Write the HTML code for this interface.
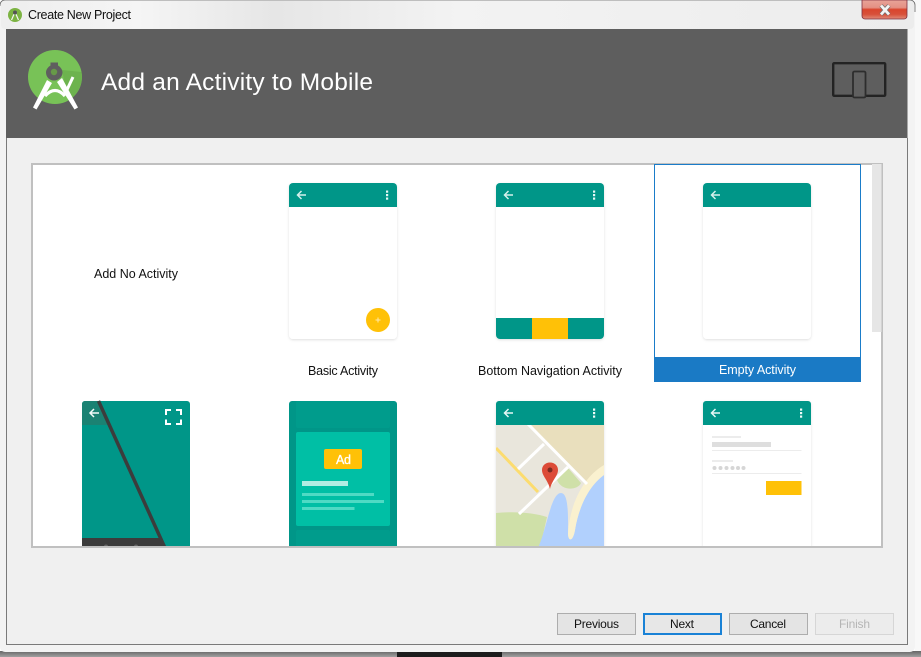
<!DOCTYPE html>
<html>
<head>
<meta charset="utf-8">
<title>Create New Project</title>
<style>
html,body{margin:0;padding:0;width:921px;height:657px;overflow:hidden;background:#fff}
svg{display:block}
text{font-family:"Liberation Sans",sans-serif;font-size:12.500px;fill:#111}
</style>
</head>
<body>
<svg width="921" height="657" viewBox="0 0 921 657" xmlns="http://www.w3.org/2000/svg">
<defs>
<linearGradient id="bar" x1="0" y1="0" x2="1" y2="0">
<stop offset="0" stop-color="#eeeeee"/><stop offset=".15" stop-color="#f5f5f5"/><stop offset=".3" stop-color="#e6e6e6"/><stop offset=".5" stop-color="#f3f3f3"/><stop offset="1" stop-color="#ececec"/>
</linearGradient>
<linearGradient id="close" x1="0" y1="0" x2="0" y2="1">
<stop offset="0" stop-color="#e8a398"/><stop offset=".4" stop-color="#e49084"/><stop offset=".5" stop-color="#d9452e"/><stop offset=".75" stop-color="#d8503a"/><stop offset="1" stop-color="#e08a78"/>
</linearGradient>
<linearGradient id="shade" x1="0" y1="0" x2="0" y2="1">
<stop offset="0" stop-color="#666"/><stop offset="1" stop-color="#a0a0a0"/>
</linearGradient>
<filter id="sh" x="-10%" y="-10%" width="120%" height="120%">
<feDropShadow dx="0" dy="1" stdDeviation="1.200" flood-color="#000" flood-opacity=".13"/>
</filter>
<clipPath id="listclip"><rect x="33" y="164" width="848" height="382"/></clipPath>
<clipPath id="mapclip"><path d="M496 425H604V548H496Z"/></clipPath>
</defs>

<!-- desktop behind -->
<rect x="0" y="651" width="921" height="6" fill="url(#shade)"/>
<rect x="397" y="652" width="105" height="5" fill="#1c1c1c"/>
<rect x="915" y="0" width="6" height="651" fill="#f8f8f8"/>

<!-- window frame -->
<rect x="0" y="0" width="915" height="652" rx="5" fill="#f3f3f3"/>
<path d="M0 6V5a5 5 0 0 1 5-5H910a5 5 0 0 1 5 5V12" fill="none" stroke="#666" stroke-width=".8"/>
<rect x="1" y="1" width="913" height="28" rx="4" fill="url(#bar)"/>
<rect x="6.500" y="29" width="901" height="615.500" fill="#f0f0f0"/>
<path d="M6.500 138V644.500H907.500V138" fill="none" stroke="#7a7a7a" stroke-width="1"/>

<!-- title bar -->
<circle cx="15" cy="15" r="7" fill="#7cb342"/>
<path d="M15 12L11.500 20M15 12L18.500 20" stroke="#f4f4f4" stroke-width="1.200" fill="none"/>
<circle cx="15" cy="12.500" r="2" fill="#555"/>
<text x="28" y="19" textLength="103" lengthAdjust="spacing">Create New Project</text>

<!-- close -->
<path d="M862 0H907V16a3 3 0 0 1-3 3H865a3 3 0 0 1-3-3Z" fill="url(#close)" stroke="#7d3040" stroke-width=".8"/>
<path d="M881 5.500L889 14.500M889 5.500L881 14.500" stroke="#6f6f6f" stroke-width="4.200"/>
<path d="M881 5.500L889 14.500M889 5.500L881 14.500" stroke="#f4f4f4" stroke-width="2.800"/>

<!-- header -->
<rect x="6" y="29" width="901.500" height="109" fill="#5e5e5e"/>
<circle cx="55" cy="77" r="27" fill="#78c257"/>
<path d="M62 70L81.500 72A27 27 0 0 1 68 100.500Z" fill="#6aae4b" opacity=".75"/>
<path d="M45 96Q55 85 65 96" stroke="#fff" stroke-width="3.200" fill="none"/>
<path d="M47 80L33 107.500L36.500 109.500L52 83Z" fill="#fff"/>
<path d="M57 82L74.500 109.500L78 107.500L62 78Z" fill="#fff"/>
<path d="M73 77L65.500 93" stroke="#fff" stroke-width="3"/>
<path d="M50.500 62.500H58V65.500C60.500 67 62.500 69.500 62.500 72.500C62.500 77 58.500 80.500 54 80.500C49.500 80.500 46 77 46 72.500C46 69.500 48 67 50.500 65.500Z" fill="#5f5f5f"/>
<circle cx="54" cy="72" r="3.200" fill="#679a48"/>
<text x="101" y="90" textLength="272" lengthAdjust="spacing" style="font-size:24.500px;fill:#fff">Add an Activity to Mobile</text>

<rect x="833.200" y="63.200" width="52" height="32.600" rx="1" fill="none" stroke="#232323" stroke-width="2.400"/>
<rect x="853" y="71.500" width="12.500" height="26" rx="1.500" fill="#606060" stroke="#2d2d2d" stroke-width="1.800"/>

<!-- list -->
<rect x="32" y="164" width="850" height="383" fill="#fff" stroke="#c0c0c0" stroke-width="2"/>
<rect x="872" y="164" width="9.500" height="168" fill="#e6e6e6"/>

<g clip-path="url(#listclip)">
<text x="94" y="278" textLength="84" lengthAdjust="spacing">Add No Activity</text>

<!-- Basic -->
<rect x="289" y="183" width="108" height="156" rx="4" fill="#fff" filter="url(#sh)"/>
<path d="M289 207V187a4 4 0 0 1 4-4H393a4 4 0 0 1 4 4V207Z" fill="#009688"/>
<g fill="none" stroke="#d4f0ec" stroke-width="1.500"><path d="M306 195H297.500M301.500 191L297.500 195L301.500 199"/></g>
<g fill="#e6f7f5"><rect x="386" y="190.500" width="2.200" height="2.200"/><rect x="386" y="194" width="2.200" height="2.200"/><rect x="386" y="197.500" width="2.200" height="2.200"/></g>
<circle cx="378" cy="320" r="12" fill="#ffc107"/>
<path d="M375.500 320H380.500M378 317.500V322.500" stroke="#ffe9a8" stroke-width="1"/>
<text x="308" y="375" textLength="70" lengthAdjust="spacing">Basic Activity</text>

<!-- Bottom nav -->
<rect x="496" y="183" width="108" height="156" rx="4" fill="#fff" filter="url(#sh)"/>
<path d="M496 207V187a4 4 0 0 1 4-4H600a4 4 0 0 1 4 4V207Z" fill="#009688"/>
<g fill="none" stroke="#d4f0ec" stroke-width="1.500"><path d="M513 195H504.500M508.500 191L504.500 195L508.500 199"/></g>
<g fill="#e6f7f5"><rect x="593" y="190.500" width="2.200" height="2.200"/><rect x="593" y="194" width="2.200" height="2.200"/><rect x="593" y="197.500" width="2.200" height="2.200"/></g>
<path d="M496 318H604V335a4 4 0 0 1-4 4H500a4 4 0 0 1-4-4Z" fill="#009688"/>
<rect x="532" y="318" width="36" height="21" fill="#ffc107"/>
<text x="478" y="375" textLength="144" lengthAdjust="spacing">Bottom Navigation Activity</text>

<!-- Empty selected -->
<rect x="654.500" y="164.500" width="206" height="217" fill="#fff" stroke="#1a7cc9" stroke-width="1"/>
<rect x="654" y="357" width="207" height="25" fill="#1a7ac5"/>
<rect x="703" y="183" width="108" height="156" rx="4" fill="#fff" filter="url(#sh)"/>
<path d="M703 207V187a4 4 0 0 1 4-4H807a4 4 0 0 1 4 4V207Z" fill="#009688"/>
<g fill="none" stroke="#d4f0ec" stroke-width="1.500"><path d="M720 195H711.500M715.500 191L711.500 195L715.500 199"/></g>
<text x="719" y="374" textLength="77" lengthAdjust="spacing" style="fill:#fff">Empty Activity</text>

<!-- Fullscreen -->
<rect x="82" y="401" width="108" height="150" rx="3" fill="#009688"/>
<path d="M82 425V404a3 3 0 0 1 3-3H100L107 419V425Z" fill="#1b8273"/>
<g fill="none" stroke="#f4fbfa" stroke-width="1.500"><path d="M99 413H90M94 409L90 413L94 417"/></g>
<path d="M82 538H162V548H82Z" fill="#3c3c3c"/>
<path d="M98.500 401L165 548" stroke="#3c3c3c" stroke-width="3.500"/>
<g fill="#666"><circle cx="106" cy="546.500" r="2"/><circle cx="136" cy="546.500" r="2"/></g>
<g fill="none" stroke="#fff" stroke-width="2"><path d="M166 415V410H171M176 410H181V415M181 419.500V424H176M171 424H166V419.500"/></g>

<!-- Ad -->
<rect x="289" y="401" width="108" height="150" rx="3" fill="#009688"/>
<rect x="296" y="401" width="94" height="27" rx="2" fill="#009c8c"/>
<rect x="296" y="530" width="94" height="20" rx="2" fill="#009c8c"/>
<rect x="296" y="432" width="94" height="94" rx="2" fill="#00bfa5"/>
<rect x="324" y="449" width="38" height="20" rx="2" fill="#ffc107"/>
<text x="336" y="464" textLength="15" lengthAdjust="spacing" style="font-size:12.500px;fill:#fff;stroke:#fff;stroke-width:.3px">Ad</text>
<rect x="302" y="481" width="46" height="5" fill="#b2ede3"/>
<rect x="302" y="493" width="72" height="3" fill="#4fdac4"/>
<rect x="302" y="500" width="82" height="3" fill="#4fdac4"/>
<rect x="302" y="507" width="52.500" height="3" fill="#4fdac4"/>

<!-- Map -->
<rect x="496" y="401" width="108" height="150" rx="3" fill="#e9e6dc" filter="url(#sh)"/>
<path d="M496 425V404a3 3 0 0 1 3-3H601a3 3 0 0 1 3 3V425Z" fill="#009688"/>
<g fill="none" stroke="#e6f7f5" stroke-width="1.500"><path d="M513 413H504.500M508.500 409L504.500 413L508.500 417"/></g>
<g fill="#f0fbf9"><rect x="593" y="408.500" width="2.200" height="2.200"/><rect x="593" y="412" width="2.200" height="2.200"/><rect x="593" y="415.500" width="2.200" height="2.200"/></g>
<g clip-path="url(#mapclip)">
<path d="M529 425H604V466L588 483Z" fill="#e9dfbd"/>
<path d="M557 480L568 468L581 483C578 490 562 492 557 480Z" fill="#cfe0a8"/>
<path d="M496 513C515 511 535 513 547 517L540 548H496Z" fill="#cfe0a8"/>
<path d="M538 548C547 528 551 493 561 493C569 493 568 518 568 533C568 542 573 542 575 530C579 505 590 485 604 475V548Z" fill="#b1d0fd"/>
<path d="M604 465V475C590 485 579 505 575 530C573 542 568 542 568 533C570 505 582 478 604 465Z" fill="#faf1cf"/>
<path d="M496 448L538 492" stroke="#fcdc6e" stroke-width="3"/>
<g stroke="#fff" stroke-width="3" fill="none"><path d="M527 423L587 484"/><path d="M544 444L518 469"/><path d="M568 467L519 514"/></g>
<path d="M550 462.500C545 462.500 542 466 542 470C542 476 548 480 550 489C552 480 558 476 558 470C558 466 555 462.500 550 462.500Z" fill="#dc4b37"/>
<circle cx="550" cy="470" r="2.500" fill="#7a2a20"/>
</g>

<!-- Login -->
<rect x="703" y="401" width="108" height="152" rx="3" fill="#fff" filter="url(#sh)"/>
<path d="M703 425V404a3 3 0 0 1 3-3H808a3 3 0 0 1 3 3V425Z" fill="#009688"/>
<g fill="none" stroke="#e6f7f5" stroke-width="1.500"><path d="M720 413H711.500M715.500 409L711.500 413L715.500 417"/></g>
<g fill="#f0fbf9"><rect x="800" y="408.500" width="2.200" height="2.200"/><rect x="800" y="412" width="2.200" height="2.200"/><rect x="800" y="415.500" width="2.200" height="2.200"/></g>
<rect x="712" y="436" width="29" height="2" fill="#ececec"/>
<rect x="712" y="442" width="59" height="5" fill="#dedede"/>
<rect x="712" y="450" width="89.500" height="1" fill="#ececec"/>
<rect x="712" y="460" width="21" height="2" fill="#ececec"/>
<g fill="#d6d6d6"><circle cx="714.500" cy="468" r="2"/><circle cx="720.500" cy="468" r="2"/><circle cx="726.500" cy="468" r="2"/><circle cx="732.500" cy="468" r="2"/><circle cx="738" cy="468" r="2"/><circle cx="743.500" cy="468" r="2"/></g>
<rect x="712" y="473" width="89.500" height="1" fill="#ececec"/>
<rect x="766" y="481" width="35.500" height="14" fill="#ffc107"/>
</g>

<!-- buttons -->
<rect x="557.500" y="613.500" width="78" height="21" fill="#e4e4e4" stroke="#adadad"/>
<text x="574" y="628" textLength="45" lengthAdjust="spacing" style="font-size:12px">Previous</text>
<rect x="644" y="614" width="77" height="20" fill="#e7e7e7" stroke="#1a82d6" stroke-width="2"/>
<text x="670" y="628" textLength="24" lengthAdjust="spacing" style="font-size:12px">Next</text>
<rect x="729.500" y="613.500" width="78" height="21" fill="#e4e4e4" stroke="#adadad"/>
<text x="750" y="628" textLength="36" lengthAdjust="spacing" style="font-size:12px">Cancel</text>
<rect x="815.500" y="613.500" width="78" height="21" fill="#ececec" stroke="#d6d6d6"/>
<text x="839" y="628" textLength="31" lengthAdjust="spacing" style="font-size:12px;fill:#b5b5b5">Finish</text>
</svg>
</body>
</html>
